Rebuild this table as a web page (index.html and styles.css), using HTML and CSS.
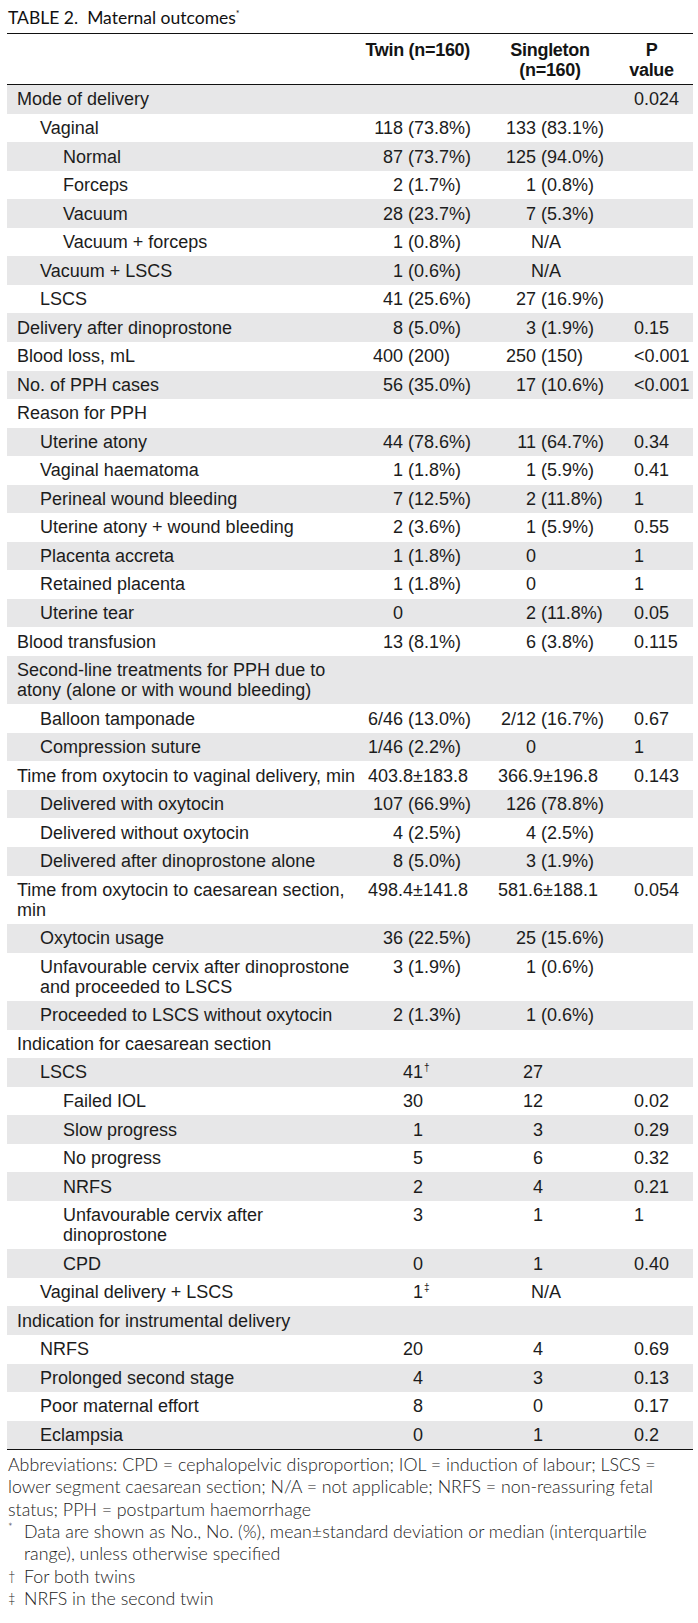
FILE: index.html
```html
<!DOCTYPE html>
<html lang="en">
<head>
<meta charset="utf-8">
<title>Table 2. Maternal outcomes</title>
<link rel="stylesheet" href="styles.css">
</head>
<body>
<div class="page">
  <h1 class="title"><span class="tno">TABLE 2.</span>Maternal outcomes<sup class="tstar">*</sup></h1>

  <div class="tbl">
    <div class="head">
      <div class="h-label"></div>
      <div class="h-twin">Twin (n=160)</div>
      <div class="h-sg">Singleton<br>(n=160)</div>
      <div class="h-p">P<br>value</div>
    </div>

    <div class="rows">
      <div class="row"><div class="lab l0">Mode of delivery</div><div class="tw"></div><div class="sg"></div><div class="pv">0.024</div></div>
      <div class="row"><div class="lab l1">Vaginal</div><div class="tw"><span class="n">118</span> (73.8%)</div><div class="sg"><span class="n">133</span> (83.1%)</div><div class="pv"></div></div>
      <div class="row"><div class="lab l2">Normal</div><div class="tw"><span class="n">87</span> (73.7%)</div><div class="sg"><span class="n">125</span> (94.0%)</div><div class="pv"></div></div>
      <div class="row"><div class="lab l2">Forceps</div><div class="tw"><span class="n">2</span> (1.7%)</div><div class="sg"><span class="n">1</span> (0.8%)</div><div class="pv"></div></div>
      <div class="row"><div class="lab l2">Vacuum</div><div class="tw"><span class="n">28</span> (23.7%)</div><div class="sg"><span class="n">7</span> (5.3%)</div><div class="pv"></div></div>
      <div class="row"><div class="lab l2">Vacuum + forceps</div><div class="tw"><span class="n">1</span> (0.8%)</div><div class="sg"><span class="na">N/A</span></div><div class="pv"></div></div>
      <div class="row"><div class="lab l1">Vacuum + LSCS</div><div class="tw"><span class="n">1</span> (0.6%)</div><div class="sg"><span class="na">N/A</span></div><div class="pv"></div></div>
      <div class="row"><div class="lab l1">LSCS</div><div class="tw"><span class="n">41</span> (25.6%)</div><div class="sg"><span class="n">27</span> (16.9%)</div><div class="pv"></div></div>
      <div class="row"><div class="lab l0">Delivery after dinoprostone</div><div class="tw"><span class="n">8</span> (5.0%)</div><div class="sg"><span class="n">3</span> (1.9%)</div><div class="pv">0.15</div></div>
      <div class="row"><div class="lab l0">Blood loss, mL</div><div class="tw"><span class="n">400</span> (200)</div><div class="sg"><span class="n">250</span> (150)</div><div class="pv">&lt;0.001</div></div>
      <div class="row"><div class="lab l0">No. of PPH cases</div><div class="tw"><span class="n">56</span> (35.0%)</div><div class="sg"><span class="n">17</span> (10.6%)</div><div class="pv">&lt;0.001</div></div>
      <div class="row"><div class="lab l0">Reason for PPH</div><div class="tw"></div><div class="sg"></div><div class="pv"></div></div>
      <div class="row"><div class="lab l1">Uterine atony</div><div class="tw"><span class="n">44</span> (78.6%)</div><div class="sg"><span class="n">11</span> (64.7%)</div><div class="pv">0.34</div></div>
      <div class="row"><div class="lab l1">Vaginal haematoma</div><div class="tw"><span class="n">1</span> (1.8%)</div><div class="sg"><span class="n">1</span> (5.9%)</div><div class="pv">0.41</div></div>
      <div class="row"><div class="lab l1">Perineal wound bleeding</div><div class="tw"><span class="n">7</span> (12.5%)</div><div class="sg"><span class="n">2</span> (11.8%)</div><div class="pv">1</div></div>
      <div class="row"><div class="lab l1">Uterine atony + wound bleeding</div><div class="tw"><span class="n">2</span> (3.6%)</div><div class="sg"><span class="n">1</span> (5.9%)</div><div class="pv">0.55</div></div>
      <div class="row"><div class="lab l1">Placenta accreta</div><div class="tw"><span class="n">1</span> (1.8%)</div><div class="sg"><span class="n">0</span></div><div class="pv">1</div></div>
      <div class="row"><div class="lab l1">Retained placenta</div><div class="tw"><span class="n">1</span> (1.8%)</div><div class="sg"><span class="n">0</span></div><div class="pv">1</div></div>
      <div class="row"><div class="lab l1">Uterine tear</div><div class="tw"><span class="n">0</span></div><div class="sg"><span class="n">2</span> (11.8%)</div><div class="pv">0.05</div></div>
      <div class="row"><div class="lab l0">Blood transfusion</div><div class="tw"><span class="n">13</span> (8.1%)</div><div class="sg"><span class="n">6</span> (3.8%)</div><div class="pv">0.115</div></div>
      <div class="row"><div class="lab l0">Second-line treatments for PPH due to<br>atony (alone or with wound bleeding)</div><div class="tw"></div><div class="sg"></div><div class="pv"></div></div>
      <div class="row"><div class="lab l1">Balloon tamponade</div><div class="tw"><span class="n">6/46</span> (13.0%)</div><div class="sg"><span class="n">2/12</span> (16.7%)</div><div class="pv">0.67</div></div>
      <div class="row"><div class="lab l1">Compression suture</div><div class="tw"><span class="n">1/46</span> (2.2%)</div><div class="sg"><span class="n">0</span></div><div class="pv">1</div></div>
      <div class="row"><div class="lab l0">Time from oxytocin to vaginal delivery, min</div><div class="tw">403.8±183.8</div><div class="sg">366.9±196.8</div><div class="pv">0.143</div></div>
      <div class="row"><div class="lab l1">Delivered with oxytocin</div><div class="tw"><span class="n">107</span> (66.9%)</div><div class="sg"><span class="n">126</span> (78.8%)</div><div class="pv"></div></div>
      <div class="row"><div class="lab l1">Delivered without oxytocin</div><div class="tw"><span class="n">4</span> (2.5%)</div><div class="sg"><span class="n">4</span> (2.5%)</div><div class="pv"></div></div>
      <div class="row"><div class="lab l1">Delivered after dinoprostone alone</div><div class="tw"><span class="n">8</span> (5.0%)</div><div class="sg"><span class="n">3</span> (1.9%)</div><div class="pv"></div></div>
      <div class="row"><div class="lab l0">Time from oxytocin to caesarean section,<br>min</div><div class="tw">498.4±141.8</div><div class="sg">581.6±188.1</div><div class="pv">0.054</div></div>
      <div class="row"><div class="lab l1">Oxytocin usage</div><div class="tw"><span class="n">36</span> (22.5%)</div><div class="sg"><span class="n">25</span> (15.6%)</div><div class="pv"></div></div>
      <div class="row"><div class="lab l1">Unfavourable cervix after dinoprostone<br>and proceeded to LSCS</div><div class="tw"><span class="n">3</span> (1.9%)</div><div class="sg"><span class="n">1</span> (0.6%)</div><div class="pv"></div></div>
      <div class="row"><div class="lab l1">Proceeded to LSCS without oxytocin</div><div class="tw"><span class="n">2</span> (1.3%)</div><div class="sg"><span class="n">1</span> (0.6%)</div><div class="pv"></div></div>
      <div class="row"><div class="lab l0">Indication for caesarean section</div><div class="tw"></div><div class="sg"></div><div class="pv"></div></div>
      <div class="row"><div class="lab l1">LSCS</div><div class="tw"><span class="ni">41</span><sup class="fn">†</sup></div><div class="sg"><span class="ni">27</span></div><div class="pv"></div></div>
      <div class="row"><div class="lab l2">Failed IOL</div><div class="tw"><span class="ni">30</span></div><div class="sg"><span class="ni">12</span></div><div class="pv">0.02</div></div>
      <div class="row"><div class="lab l2">Slow progress</div><div class="tw"><span class="ni">1</span></div><div class="sg"><span class="ni">3</span></div><div class="pv">0.29</div></div>
      <div class="row"><div class="lab l2">No progress</div><div class="tw"><span class="ni">5</span></div><div class="sg"><span class="ni">6</span></div><div class="pv">0.32</div></div>
      <div class="row"><div class="lab l2">NRFS</div><div class="tw"><span class="ni">2</span></div><div class="sg"><span class="ni">4</span></div><div class="pv">0.21</div></div>
      <div class="row"><div class="lab l2">Unfavourable cervix after<br>dinoprostone</div><div class="tw"><span class="ni">3</span></div><div class="sg"><span class="ni">1</span></div><div class="pv">1</div></div>
      <div class="row"><div class="lab l2">CPD</div><div class="tw"><span class="ni">0</span></div><div class="sg"><span class="ni">1</span></div><div class="pv">0.40</div></div>
      <div class="row"><div class="lab l1">Vaginal delivery + LSCS</div><div class="tw"><span class="ni">1</span><sup class="fn">‡</sup></div><div class="sg"><span class="na">N/A</span></div><div class="pv"></div></div>
      <div class="row"><div class="lab l0">Indication for instrumental delivery</div><div class="tw"></div><div class="sg"></div><div class="pv"></div></div>
      <div class="row"><div class="lab l1">NRFS</div><div class="tw"><span class="ni">20</span></div><div class="sg"><span class="ni">4</span></div><div class="pv">0.69</div></div>
      <div class="row"><div class="lab l1">Prolonged second stage</div><div class="tw"><span class="ni">4</span></div><div class="sg"><span class="ni">3</span></div><div class="pv">0.13</div></div>
      <div class="row"><div class="lab l1">Poor maternal effort</div><div class="tw"><span class="ni">8</span></div><div class="sg"><span class="ni">0</span></div><div class="pv">0.17</div></div>
      <div class="row"><div class="lab l1">Eclampsia</div><div class="tw"><span class="ni">0</span></div><div class="sg"><span class="ni">1</span></div><div class="pv">0.2</div></div>
    </div>
  </div>

  <div class="notes">
    <p class="abbr">Abbreviations: CPD = cephalopelvic disproportion; IOL = induction of labour; LSCS =<br>lower segment caesarean section; N/A = not applicable; NRFS = non-reassuring fetal<br>status; PPH = postpartum haemorrhage</p>
    <div class="fnote"><span class="mk mk-star">*</span><span class="ft">Data are shown as No., No. (%), mean±standard deviation or median (interquartile<br>range), unless otherwise specified</span></div>
    <div class="fnote"><span class="mk">†</span><span class="ft">For both twins</span></div>
    <div class="fnote"><span class="mk">‡</span><span class="ft">NRFS in the second twin</span></div>
  </div>
</div>
</body>
</html>
```

FILE: styles.css
```css
html, body {
  margin: 0;
  padding: 0;
  background: #ffffff;
}

.page {
  width: 686px;
  margin-left: 7px;
  color: #1c1c1c;
}

.title {
  margin: 8px 0 0 1px;
  font-family: "Lato", "Open Sans", sans-serif;
  font-weight: 400;
  font-size: 17.5px;
  line-height: 20px;
  color: #111;
  white-space: nowrap;
}

.tno {
  margin-right: 9px;
}

.tstar {
  font-size: 9px;
  line-height: 0;
  vertical-align: 7px;
}

.tbl {
  margin-top: 5px;
  border-top: 1px solid #111;
  border-bottom: 1px solid #111;
  font-family: "Liberation Sans", Arial, sans-serif;
  font-size: 18px;
  line-height: 20px;
}

.head,
.row {
  display: grid;
  grid-template-columns: 353px 130px 130px 73px;
}

.head {
  padding: 5.5px 0 4.7px;
  border-bottom: 1px solid #111;
  font-family: "Liberation Sans", Arial, sans-serif;
  font-weight: 700;
  font-size: 18px;
  letter-spacing: -0.3px;
  color: #141414;
}

.h-twin {
  text-align: right;
  padding-right: 20px;
}

.h-sg {
  text-align: center;
  padding-right: 10px;
}

.h-p {
  text-align: center;
  padding-right: 10px;
}

.row {
  padding: 4.28px 0;
  white-space: nowrap;
}

.rows .row:nth-child(odd) {
  background: #e7e7e8;
}

.lab.l0 { padding-left: 10px; }
.lab.l1 { padding-left: 33px; }
.lab.l2 { padding-left: 56px; }

.tw,
.sg {
  padding-left: 8px;
}

.tw .n {
  display: inline-block;
  width: 35px;
  text-align: right;
}

.sg .n {
  display: inline-block;
  width: 38px;
  text-align: right;
}

.tw .ni {
  display: inline-block;
  width: 55px;
  text-align: right;
}

.sg .ni {
  display: inline-block;
  width: 45px;
  text-align: right;
}

.na {
  display: inline-block;
  margin-left: 33px;
}

.fn {
  font-size: 10px;
  line-height: 0;
  vertical-align: 7px;
  margin-left: 1px;
}

.pv {
  padding-left: 14px;
}

.notes {
  padding-top: 3px;
  font-family: "Lato", "Open Sans", sans-serif;
  font-weight: 300;
  font-size: 17.8px;
  line-height: 22.3px;
  color: #222;
  white-space: nowrap;
}

.abbr {
  margin: 0;
  padding-left: 1px;
}

.fnote {
  display: grid;
  grid-template-columns: 17px auto;
}

.mk {
  padding-left: 1px;
  font-size: 13px;
}

.mk-star {
  font-size: 11px;
  line-height: 14px;
}
```
